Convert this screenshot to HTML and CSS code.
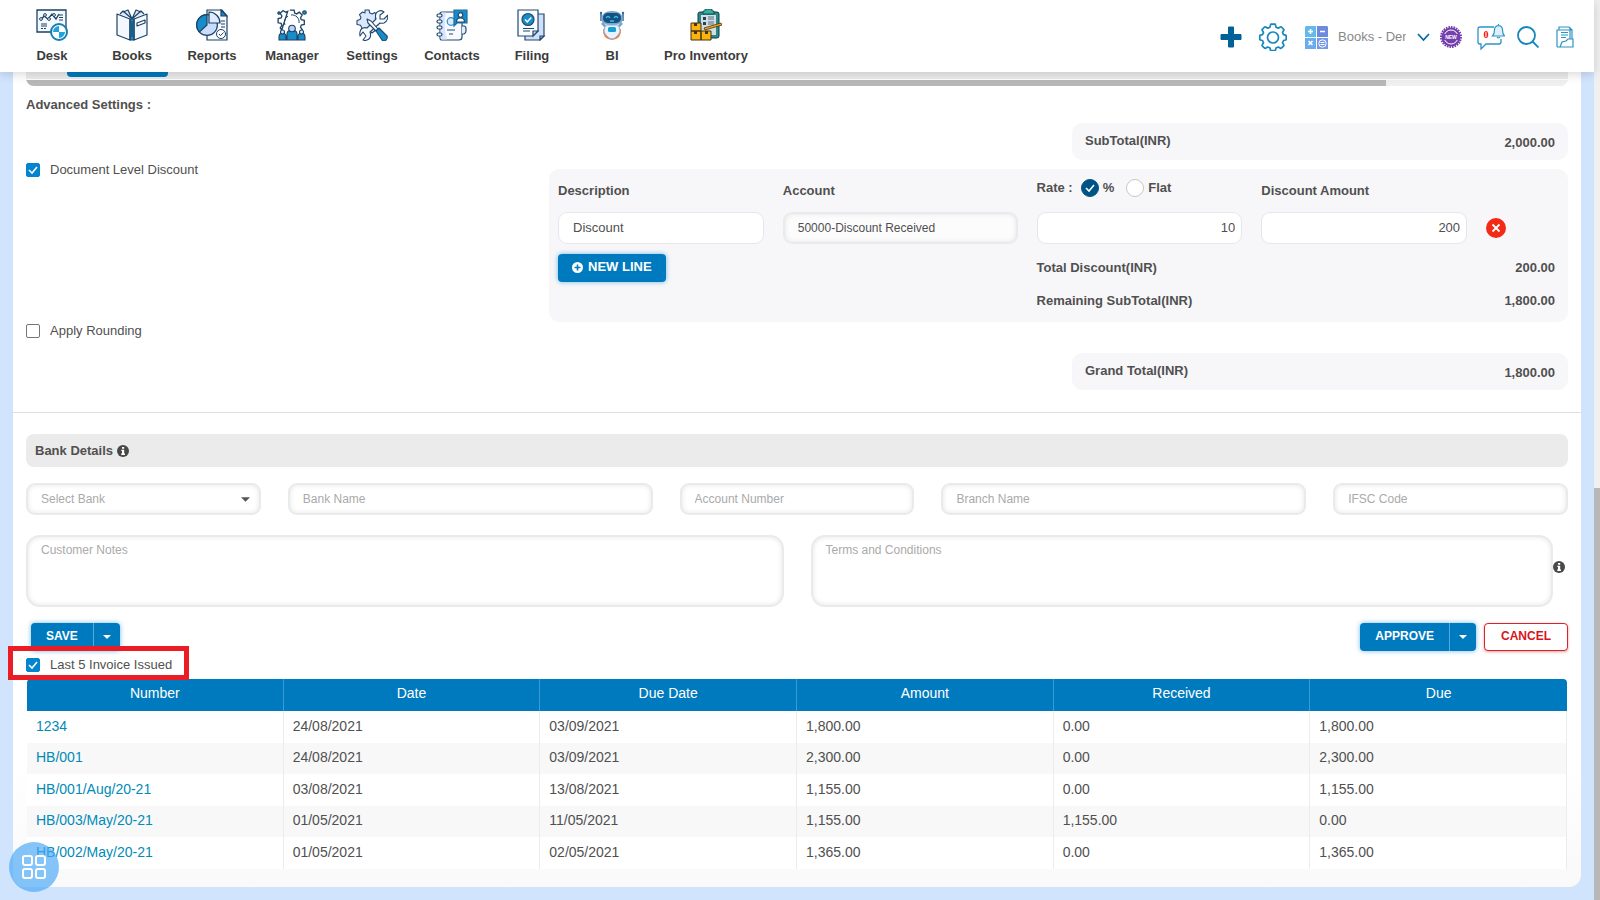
FILE: index.html
```html
<!DOCTYPE html>
<html lang="en">
<head>
<meta charset="utf-8">
<title>Books - Invoice</title>
<meta name="viewport" content="width=device-width, initial-scale=1">
<link rel="stylesheet" href="styles.css">
</head>
<body>
<svg class="defs" width="0" height="0" aria-hidden="true">
  <symbol id="info" viewBox="0 0 12 12"><circle cx="6" cy="6" r="6" fill="#484848"/><path d="M5 2h2.2v1.7H5zM4.3 4.7h2.9v3.8h.8V10H4.2V8.500H5V6.100h-.7z" fill="#fff"/></symbol>
  <symbol id="caret" viewBox="0 0 10 5"><path d="M0 0h10L5 5z" fill="currentColor"/></symbol>
</svg>
<div class="app">
  <header class="topbar">
    <nav class="nav" aria-label="Main">
      <a class="nav-item" href="#"><svg viewBox="0 0 32 32" class="nav-icon"><g fill="#f4f8ff" stroke="#1d4263" stroke-width="1.3"><path d="M1 1h29v22H1z"/><path d="M5 11l3-4 4 3 4-5 4 5 3-5" fill="none"/><g fill="#fff" stroke-width="1"><circle cx="5" cy="10" r="1.400"/><circle cx="9" cy="6" r="1.400"/><circle cx="13" cy="10" r="1.400"/><circle cx="18" cy="6" r="1.400"/></g><path d="M23 6h4M23 8.500h4M23 11h4M5 15h6M5 17h6M5 19.500h2M8 19.500h2" fill="none" stroke-width="1"/></g><circle cx="23" cy="23" r="8" fill="#fff" stroke="#147fb5" stroke-width="2"/><path d="M23 17v6h-6a6 6 0 0 1 6-6zM23 29v-6h6a6 6 0 0 1-6 6z" fill="#20a2dc"/></svg><span>Desk</span></a>
      <a class="nav-item" href="#"><svg viewBox="0 0 32 32" class="nav-icon"><g fill="#f3f7ff" stroke="#1d4263" stroke-width="1.200" stroke-linejoin="round"><path d="M1 5l13 5v21L1 26zM31 5l-13 5v21l13-5z"/><path d="M4 5l3-3 8 7M7 3l5-2 4 9M28 5l-3-3-8 7M25 3l-5-2-4 9" fill="#dce8ff"/><path d="M21 14l8-3v3l-8 3z" fill="#fff"/><path d="M14 10h4v21h-4z" fill="#168cc9"/><path d="M14 13h4M14 27h4M16 14v12"/></g></svg><span>Books</span></a>
      <a class="nav-item" href="#"><svg viewBox="0 0 32 32" class="nav-icon"><g stroke="#1d4263" stroke-width="1.200"><path d="M11 1h15l5 6v24H11z" fill="#f6f8ff"/><path d="M25 1v6h6z" fill="#168cc9"/><path d="M25 12h4M25 15h4M25 18h4" fill="none"/><circle cx="11" cy="16" r="10.400" fill="#c9dcfb"/><path d="M11 5.600A10.400 10.400 0 0 0 3.500 23L11 16z" fill="#168cc9"/><path d="M13 3a11 11 0 0 1 11 11H13z" fill="#dfeaff"/><circle cx="25" cy="25" r="4.500" fill="#fff" stroke-width="1"/><path d="M23 25l1.500 1.700L27.500 23.500" fill="none" stroke-width="1"/></g></svg><span>Reports</span></a>
      <a class="nav-item" href="#"><svg viewBox="0 0 32 32" class="nav-icon"><path d="M13.900 1.100h4.200l.6 3 2 .8 2.600-1.700 2.900 2.900-1.700 2.600.8 2 3 .6v4.200l-3 .6-.8 2 1.700 2.600-2 2M5.800 21l-1.600-2 1.700-2.600-.8-2-3-.6V9.600l3-.6.8-2-1.700-2.600 2.900-2.900 2.600 1.700 2-.8z" fill="none" stroke="#1d4263" stroke-width="1.300"/><path d="M9 16a7 7 0 0 1 3-9M15 6a7 7 0 0 1 8 8" fill="none" stroke="#1d4263"/><g stroke="#1d4263" stroke-width="1.100"><circle cx="3" cy="4" r="1.200" fill="#168cc9"/><circle cx="28.500" cy="3.500" r="1.800" fill="#168cc9"/><path d="M3 31v-3q0-4 3.500-4t3.500 4v3zM22 31v-3q0-4 3.500-4t3.500 4v3zM11 31v-6q0-4 5-4t5 4v6z" fill="#168cc9"/><circle cx="6.500" cy="23" r="2" fill="#dce8ff"/><circle cx="25.500" cy="23" r="2" fill="#dce8ff"/><circle cx="16" cy="19.500" r="3.300" fill="#b8d0f4"/></g></svg><span>Manager</span></a>
      <a class="nav-item" href="#"><svg viewBox="0 0 32 32" class="nav-icon"><g stroke="#234a6d" stroke-width="1.100" stroke-linejoin="round"><path d="M9 1h4l.8 3 2.400 1 2.600-1.500 2 3L19.300 9l.7 2.500 2 .8v3.700l-3 .8-1 2.200 1 2.800-3 2.200-2.600-2L10 22l-2 1.500-3-2 .8-2.800-1.300-2.400L1 15.500v-4L4 10.500l1-2L3.500 5.700l3-2.700L9 4z" fill="#dbe7ff"/><path d="M28 3l-4 3v4h4l4-4q0 6-4 8-2 .6-4 0L14 23q2 6-3 8-2 1-4 0l3-4-3-4-3 4q-1-6 3-8 2-.8 4 0l9-9q-2-6 3-8 2-1 5 1z" fill="#f6f9ff"/><path d="M11 10l4 2 7 8-2 2-8-8z" fill="#fff"/><path d="M20 22l3-3 8 8q1 2-1 4t-4 0z" fill="#168cc9"/></g></svg><span>Settings</span></a>
      <a class="nav-item" href="#"><svg viewBox="0 0 32 32" class="nav-icon"><g stroke="#234a6d" stroke-width="1.200"><path d="M6 3h17q3 0 3 3v22q0 3-3 3H6q-2 0-2-2V5q0-2 2-2z" fill="#f8faff"/><path d="M6 3.500h4q-3 13 1 27H6q-1.500 0-1.500-2v-23z" fill="#d6e4ff" stroke="none"/><path d="M26 17h2q2 0 2 3v2q0 2-2 3h-2" fill="#e3edff"/><g fill="#fff"><rect x="1" y="5" width="5" height="3" rx="1.500"/><rect x="1" y="11" width="5" height="3" rx="1.500"/><rect x="1" y="17" width="5" height="3" rx="1.500"/><rect x="1" y="24" width="5" height="3" rx="1.500"/></g><circle cx="15" cy="12.500" r="3.800" fill="#dce8ff" stroke="#2a91be"/><path d="M11 21h8M13 25h4" fill="none"/><path d="M18 1h13v13H21l-3 3z" fill="#168cc9" stroke="#1b709f"/><circle cx="24.500" cy="6" r="2.300" fill="#fff"/><path d="M20.500 13q0-4 4-4t4 4z" fill="#fff"/></g></svg><span>Contacts</span></a>
      <a class="nav-item" href="#"><svg viewBox="0 0 32 32" class="nav-icon"><g stroke="#234a6d" stroke-width="1.200"><path d="M9 5h19v22l-4 4H9z" fill="#cfdffc"/><path d="M24 31v-4h4z" fill="#9dbbea"/><path d="M2 1h20v21l-5 5H2z" fill="#fbfcff"/><path d="M17 27v-5h5z" fill="#cfdffc"/><circle cx="12" cy="10.500" r="6" fill="#168cc9"/><path d="M9 10.500l2.300 2.300 4-4.300" fill="none" stroke="#fff" stroke-width="1.500"/><path d="M7 19.500h11M7 22h7" fill="none"/></g></svg><span>Filing</span></a>
      <a class="nav-item" href="#"><svg viewBox="0 0 32 32" class="nav-icon"><path d="M7 20q-1 10 9 11 10-1 9-11z" fill="#f18146"/><path d="M5 4v8M27 4v8" stroke="#33699b" stroke-width="1.500"/><circle cx="5" cy="4" r="1.200" fill="#33699b"/><circle cx="27" cy="4" r="1.200" fill="#33699b"/><path d="M5 10q1-8 11-8t11 8q-1 6-11 6T5 10z" fill="#7ba3cc"/><rect x="7" y="4" width="18" height="10" rx="5" fill="#15517f"/><path d="M10 9q2-3 4 0M18 9q2-3 4 0M14 12h4" fill="none" stroke="#39c1ed" stroke-width="1.300"/><path d="M6 14l4 4M26 14l-4 4" stroke="#70a5d6" stroke-width="2.500"/><path d="M10 16h12q4 6 0 10-3 4-6 4t-6-4q-4-4 0-10z" fill="#e7f1ff" stroke="#8faed1"/><rect x="12" y="18" width="8" height="5" rx="1.500" fill="#169fd3"/></svg><span>BI</span></a>
      <a class="nav-item nav-item-wide" href="#"><svg viewBox="0 0 32 32" class="nav-icon"><rect x="8" y="3" width="21" height="26" rx="2" fill="#278a8a" stroke="#123c40"/><path d="M11 6h15v20H11z" fill="#d3dde6"/><path d="M13 4V2h2V0h7v2h2v3H13z" fill="#31b0a5" stroke="#123c40" stroke-width=".8"/><path d="M13 8h3v3h-3zM13 13h3v3h-3z" fill="#29424a"/><path d="M18 8h6M18 10h6M18 13h6M18 15h6" stroke="#57707a"/><g fill="#f9b410" stroke="#453212"><path d="M1 14h10v8H1zM1 22h10v9H1zM11 22h10v9H11z"/></g><path d="M4 14h3v3H4zM4 22h3v3H4zM15 22h3v3h-3z" fill="#453212"/><path d="M14 19l17-5 1 2-17 5z" fill="#f9a810" stroke="#453212" stroke-width=".8"/></svg><span>Pro Inventory</span></a>
    </nav>
    <div class="tools">
      <button class="icon-btn" aria-label="Add"><svg width="22" height="22" viewBox="0 0 22 22"><path d="M8.500 1h5v7.500H21v5h-7.500V21h-5v-7.500H1v-5h7.500z" fill="#006298" stroke="#006298" stroke-linejoin="round"/></svg></button>
      <button class="icon-btn gear" aria-label="Settings"><svg width="28" height="28" viewBox="0 0 28 28"><g fill="none" stroke="#1687bd" stroke-width="1.700" stroke-linejoin="round"><path d="M12.200 1.200h3.600q.6 0 .7.700l.5 2.300 2.300 1 2.100-1.300q.5-.3 1 .1l2.300 2.300q.4.500.1 1l-1.300 2.100 1 2.300 2.100.5q.6.100.6.700v3.400q0 .6-.6.700l-2.100.5-1 2.300 1.300 2.100q.3.500-.1 1l-2.300 2.300q-.5.400-1 .1l-2.100-1.300-2.300 1-.5 2.100q-.1.600-.7.600h-3.600q-.6 0-.7-.6l-.5-2.100-2.300-1-2.100 1.300q-.5.300-1-.1l-2.300-2.300q-.4-.5-.1-1l1.300-2.100-1-2.300-2.100-.5q-.6-.1-.6-.7v-3.400q0-.6.600-.7l2.100-.5 1-2.300-1.300-2.100q-.3-.5.100-1l2.300-2.300q.5-.4 1-.1l2.100 1.300 2.300-1 .5-2.300q.1-.7.700-.7z"/><circle cx="14" cy="14.500" r="5.500"/></g></svg></button>
      <svg class="calc" width="23" height="23" viewBox="0 0 23 23"><path d="M1 0h10v11H0V1z" fill="#61bae8"/><path d="M12 0h10l1 1v10H12z" fill="#6e8ade"/><path d="M0 12h11v11H0z" fill="#6bacec"/><path d="M12 12h11v11H12z" fill="#7699e5"/><path d="M3 5.500h5M5.500 3v5M15 5.500h5M3.500 15l4 4M7.500 15l-4 4" stroke="#fff" stroke-width="1.600"/><circle cx="17.500" cy="17.500" r="3.700" fill="none" stroke="#fff"/><path d="M15.500 16.500h4M15.500 18.500h4" stroke="#fff"/></svg>
      <select class="org" aria-label="Organisation"><option>Books - Demo</option></select>
      <svg class="chev" width="13" height="9" viewBox="0 0 13 9"><path d="M1 1l5.500 6L12 1" fill="none" stroke="#006a9e" stroke-width="1.700"/></svg>
      <button class="icon-btn new" aria-label="What is new"><svg width="22" height="22" viewBox="0 0 22 22"><circle cx="11" cy="11" r="9.500" fill="#7440ae"/><circle cx="11" cy="11" r="10" fill="none" stroke="#7440ae" stroke-width="2" stroke-dasharray="1.600 1"/><circle cx="11" cy="11" r="7" fill="none" stroke="#fff" stroke-width="1"/><path d="M3 8h16v6H3z" fill="#7440ae"/><text x="11" y="13" text-anchor="middle" class="new-text">NEW</text></svg></button>
      <button class="icon-btn chat" aria-label="Notifications"><svg width="28" height="26" viewBox="0 0 28 26"><path d="M17 3H3Q1 3 1 5v13q0 2 2 2h1v5l5-5h13q2 0 2-2v-3" fill="none" stroke="#2b94c5" stroke-width="1.300"/><path d="M15.500 12q2-2 2-6 0-4 4-4.500 4 .5 4 4.500 0 4 2 6zM20 13q1.500 2 3 0M21.500 0v2" fill="#dff0fb" stroke="#2b94c5" stroke-width="1.200"/><text x="9" y="14" text-anchor="middle" class="chat-text">0</text></svg></button>
      <button class="icon-btn search" aria-label="Search"><svg width="22" height="22" viewBox="0 0 22 22"><circle cx="9.500" cy="9.500" r="8.500" fill="none" stroke="#1687bd" stroke-width="1.800"/><path d="M15.500 15.500l6 6" stroke="#1687bd" stroke-width="1.800"/></svg></button>
      <button class="icon-btn" aria-label="Documents"><svg width="18" height="22" viewBox="0 0 18 22"><g fill="none" stroke="#2b94c5" stroke-width="1.200"><path d="M1 21V4h2V1h10l1 1v2h2v9M3 4h11v9M1 21h16v-8h-5l-2 2-4 1-2 5M14 2l2 2"/><path d="M5 6.500h7M5 9h7M5 11.500h5" stroke-width="1.200"/></g></svg></button>
    </div>
  </header>

  <main class="page">
    <section class="card">
      <div class="grid-end"><span class="grid-tab"></span><span class="grid-scroll"><span class="grid-thumb"></span></span></div>
      <h2 class="advanced">Advanced Settings :</h2>
      <div class="total-box"><span class="total-label">SubTotal(INR)</span><output class="total-value">2,000.00</output></div>

      <div class="discount-row">
        <label class="check"><input type="checkbox" checked><span>Document Level Discount</span></label>
        <div class="discount">
          <div class="cell"><label class="head" for="desc">Description</label><input class="field" id="desc" value="Discount"></div>
          <div class="cell"><label class="head" for="acct">Account</label><input class="field field-inset" id="acct" value="50000-Discount Received"></div>
          <div class="cell"><div class="head rate"><span>Rate :</span><label><input type="radio" name="rate" checked>%</label><label><input type="radio" name="rate">Flat</label></div><input class="field num" aria-label="Rate" value="10"></div>
          <div class="cell"><label class="head" for="amt">Discount Amount</label><input class="field num" id="amt" value="200"></div>
          <button class="remove" aria-label="Remove line"><svg width="20" height="20" viewBox="0 0 20 20"><circle cx="10" cy="10" r="10" fill="#f52a16"/><path d="M6.500 6.500l7 7M13.500 6.500l-7 7" stroke="#fff" stroke-width="1.800"/></svg></button>
          <div class="new-line"><button class="btn"><svg width="11" height="11" viewBox="0 0 11 11"><circle cx="5.500" cy="5.500" r="5.500" fill="#fff"/><path d="M2.500 5.500h6M5.500 2.500v6" stroke="#007abe" stroke-width="1.600"/></svg>NEW LINE</button></div>
          <div class="sums"><div><span>Total Discount(INR)</span><output>200.00</output></div><div><span>Remaining SubTotal(INR)</span><output>1,800.00</output></div></div>
        </div>
      </div>
      <label class="check rounding"><input type="checkbox"><span>Apply Rounding</span></label>
      <div class="total-box grand"><span class="total-label">Grand Total(INR)</span><output class="total-value">1,800.00</output></div>

      <hr class="rule">
      <h2 class="bank">Bank Details <svg width="12" height="12"><use href="#info"/></svg></h2>
      <div class="bank-fields">
        <div class="select-wrap"><select class="field field-inset" aria-label="Select Bank"><option>Select Bank</option></select><svg class="select-caret" width="9" height="5"><use href="#caret"/></svg></div>
        <input class="field field-inset" placeholder="Bank Name" aria-label="Bank Name">
        <input class="field field-inset" placeholder="Account Number" aria-label="Account Number">
        <input class="field field-inset" placeholder="Branch Name" aria-label="Branch Name">
        <input class="field field-inset" placeholder="IFSC Code" aria-label="IFSC Code">
      </div>
      <div class="notes">
        <textarea class="field field-inset" placeholder="Customer Notes" aria-label="Customer Notes"></textarea>
        <div class="terms"><textarea class="field field-inset" placeholder="Terms and Conditions" aria-label="Terms and Conditions"></textarea><svg width="12" height="12"><use href="#info"/></svg></div>
      </div>

      <div class="actions">
        <div class="split"><button class="btn">SAVE</button><button class="btn btn-caret" aria-label="More save options"><svg width="8" height="4"><use href="#caret"/></svg></button></div>
        <div class="actions-end">
          <div class="split"><button class="btn">APPROVE</button><button class="btn btn-caret" aria-label="More approve options"><svg width="8" height="4"><use href="#caret"/></svg></button></div>
          <button class="btn btn-cancel">CANCEL</button>
        </div>
      </div>
      <label class="check last-five"><input type="checkbox" checked><span>Last 5 Invoice Issued</span></label>

      <table class="invoices">
        <thead><tr><th>Number</th><th>Date</th><th>Due Date</th><th>Amount</th><th>Received</th><th>Due</th></tr></thead>
        <tbody>
          <tr><td><a href="#">1234</a></td><td>24/08/2021</td><td>03/09/2021</td><td>1,800.00</td><td>0.00</td><td>1,800.00</td></tr>
          <tr><td><a href="#">HB/001</a></td><td>24/08/2021</td><td>03/09/2021</td><td>2,300.00</td><td>0.00</td><td>2,300.00</td></tr>
          <tr><td><a href="#">HB/001/Aug/20-21</a></td><td>03/08/2021</td><td>13/08/2021</td><td>1,155.00</td><td>0.00</td><td>1,155.00</td></tr>
          <tr><td><a href="#">HB/003/May/20-21</a></td><td>01/05/2021</td><td>11/05/2021</td><td>1,155.00</td><td>1,155.00</td><td>0.00</td></tr>
          <tr><td><a href="#">HB/002/May/20-21</a></td><td>01/05/2021</td><td>02/05/2021</td><td>1,365.00</td><td>0.00</td><td>1,365.00</td></tr>
        </tbody>
      </table>
    </section>
  </main>
</div>
<div class="rail"><div class="rail-thumb"></div></div>
<button class="fab" aria-label="Apps"><svg width="24" height="24" viewBox="0 0 24 24"><g fill="none" stroke="#fff" stroke-width="2"><rect x="1" y="1" width="9" height="9" rx="2"/><rect x="14" y="1" width="9" height="9" rx="2"/><rect x="1" y="14" width="9" height="9" rx="2"/><rect x="14" y="14" width="9" height="9" rx="2"/></g></svg></button>
</body>
</html>
```

FILE: styles.css
```css
* { box-sizing: border-box; }
body {
  margin: 0;
  min-height: 100vh;
  display: flex;
  background: #d1e4fe;
  color: #505050;
  font: 13px/18px "Liberation Sans", Arial, sans-serif;
}
button, input, select, textarea { font: inherit; color: inherit; margin: 0; }
button { cursor: pointer; }
h2 { margin: 0; font-size: 13px; font-weight: bold; }
a { text-decoration: none; }
.defs { position: absolute; }
.app { flex: 1; min-width: 0; }

/* Top bar */
.topbar {
  position: relative;
  z-index: 2;
  display: flex;
  justify-content: space-between;
  height: 72px;
  padding: 0 20px 0 12px;
  background: #fff;
  box-shadow: 0 2px 10px rgba(0, 0, 0, .16);
}
.nav { display: flex; }
.nav-item {
  width: 80px;
  padding-top: 9px;
  display: flex;
  flex-direction: column;
  align-items: center;
  gap: 6px;
  color: #3c3c3c;
  font-weight: bold;
}
.nav-item-wide { width: 108px; }
.nav-icon { width: 32px; height: 32px; }
.tools { display: flex; align-items: center; padding-top: 2px; }
.icon-btn { display: flex; padding: 0; border: 0; background: none; }
.gear { margin-left: 17px; }
.calc { margin-left: 18px; }
.org {
  width: 68px;
  margin-left: 10px;
  padding: 0;
  border: 0;
  background: none;
  color: #888;
  appearance: none;
  overflow: hidden;
  text-overflow: clip;
}
.chev { margin-left: 11px; }
.new { margin-left: 10px; }
.chat { margin-left: 15px; }
.search { margin: 0 17px 0 12px; }
.new-text { font: bold 5px "Liberation Sans", sans-serif; fill: #fff; }
.chat-text { font: bold 10px "Liberation Serif", serif; fill: #f00; }

/* Card */
.page { padding: 0 13px; }
.card {
  padding: 0 13px 18px;
  background: linear-gradient(#fff 85%, #f9f9f9);
  border-radius: 0 0 12px 12px;
}
.grid-end {
  display: flex;
  flex-direction: column;
  justify-content: space-between;
  height: 14px;
  overflow: hidden;
  background: #ececec;
  border-radius: 0 0 8px 8px;
}
.grid-tab { width: 101px; height: 5px; margin-left: 41px; background: #007abe; border-radius: 0 0 4px 4px; }
.grid-scroll { height: 7px; border-top: 1px solid #fff; background: #f0f0f0; }
.grid-thumb { display: block; width: 88.2%; height: 6px; background: #b8b8b8; }
.advanced { margin: 10px 0 9px; }
.total-box {
  display: flex;
  justify-content: space-between;
  width: 496px;
  height: 37px;
  margin-left: auto;
  padding: 9px 13px 0;
  border-radius: 10px;
  background: #f7f7f9;
  font-weight: bold;
}
.total-value { padding-top: 2px; }
.grand { margin-top: 13px; }

.check { display: flex; align-items: center; align-self: start; width: max-content; gap: 10px; }
.check input, .rate input {
  appearance: none;
  flex: none;
  width: 14px;
  height: 14px;
  border: 1px solid #767676;
  border-radius: 2px;
  background: #fff;
}
.check input:checked {
  border-color: #0284ce;
  background: #0284ce url("data:image/svg+xml,%3Csvg xmlns='http://www.w3.org/2000/svg' viewBox='0 0 14 14'%3E%3Cpath d='M3 7l3 3 5-6' fill='none' stroke='white' stroke-width='1.600'/%3E%3C/svg%3E") center / 14px;
}
.discount-row { display: grid; grid-template-columns: 523px 1fr; }
.discount-row .check { padding-top: 1px; }
.discount {
  display: grid;
  grid-template-columns: 206fr 235fr 206fr 206fr 73fr;
  column-gap: 19px;
  align-content: start;
  height: 153px;
  margin-top: 9px;
  padding: 8px 9px 0;
  border-radius: 10px;
  background: #f7f7f9;
}
.cell { min-width: 0; }
.head { display: block; height: 35px; padding-top: 5px; font-weight: bold; }
.field {
  display: block;
  width: 100%;
  height: 32px;
  padding: 0 14px 2px;
  border: 1px solid #e6e7ea;
  border-radius: 9px;
  background: #fff;
  outline: 0;
}
.field-inset { border: 2px solid #e9eaeb; box-shadow: inset 0 0 5px #e4e4e4; padding: 0 13px; font-size: 12px; }
.discount .field-inset { background: #fcfcfd; }
.field::placeholder { color: #aaa; opacity: 1; }
.num { padding: 0 6px 2px; text-align: right; }
.rate { display: flex; gap: 12px; padding-top: 2px; }
.rate span { margin-right: -4px; }
.rate label { display: flex; gap: 4px; }
.rate input { width: 18px; height: 18px; border-color: #c7c7c7; border-radius: 50%; }
.rate input:checked {
  border-color: #005385;
  background: #005385 url("data:image/svg+xml,%3Csvg xmlns='http://www.w3.org/2000/svg' viewBox='0 0 18 18'%3E%3Cpath d='M5 9l3 3 5-6' fill='none' stroke='white' stroke-width='1.600'/%3E%3C/svg%3E") center / 18px;
}
.remove { display: flex; align-self: end; width: 20px; height: 26px; padding: 0; border: 0; background: none; }
.new-line { grid-column: 1 / 3; padding-top: 10px; }
.new-line .btn { padding: 0 14px 2px; gap: 5px; font-size: 13px; line-height: 18px; }
.sums { grid-column: 3 / 6; padding: 15px 4px 0 0; display: grid; gap: 15px; font-weight: bold; }
.sums div { display: flex; justify-content: space-between; }

.rule { height: 1px; margin: 22px -13px 21px; border: 0; background: #e0e0e0; }
.bank { height: 33px; padding: 8px 9px; border-radius: 8px; background: #ebebeb; }
.bank svg { vertical-align: -2px; }
.bank-fields { display: grid; grid-template-columns: 235fr 365fr 235fr 365fr 235fr; gap: 27px; margin: 16px 0 20px; }
.select-wrap { position: relative; }
.select-wrap .field { color: #aaa; appearance: none; }
.select-caret { position: absolute; right: 11px; top: 14px; color: #555; pointer-events: none; }
.notes { display: grid; grid-template-columns: 1fr 1fr; gap: 27px; }
.notes .field { height: 72px; padding: 4px 13px; border-radius: 14px; resize: none; }
.terms { display: flex; align-items: center; padding-right: 3px; }
.terms svg { flex: none; margin-top: -8px; }

/* Buttons */
.btn {
  display: flex;
  align-items: center;
  gap: 4px;
  height: 28px;
  padding: 0 15px;
  border: 0;
  border-radius: 4px;
  background: #007abe;
  color: #fff;
  font-size: 12px;
  font-weight: bold;
  box-shadow: 0 0 5px rgba(0, 132, 206, .55);
}
.split { display: flex; }
.split .btn { border-radius: 4px 0 0 4px; padding-bottom: 2px; }
.split .btn-caret { width: 27px; justify-content: center; padding: 0; border-left: 1px solid #58a9d5; border-radius: 0 4px 4px 0; }
.actions { display: flex; justify-content: space-between; padding-left: 5px; margin-top: 16px; }
.actions-end { display: flex; gap: 8px; }
.btn-cancel { padding: 0 16px 2px; border: 1px solid #d8232a; background: #fff; color: #d8141c; box-shadow: 0 1px 3px rgba(190, 0, 0, .4); }
.last-five { position: relative; margin: 5px 0; }
.last-five::after {
  content: "";
  position: absolute;
  inset: -10px -17px -6px -18px;
  border: 5px solid #eb1c24;
}

/* Recent invoices */
.invoices { width: calc(100% - 2px); margin: 0 1px; border-spacing: 0; table-layout: fixed; font-size: 14px; background: #fff; }
.invoices th { height: 32px; padding: 0 9px 4px; background: #007abe; color: #fff; font-weight: normal; border-right: 1px solid #3b9bd0; }
.invoices th:first-child { border-radius: 4px 0 0 0; }
.invoices th:last-child { border-right: 0; border-radius: 0 4px 0 0; }
.invoices td { height: 32px; padding: 0 9px 3px; border-right: 1px solid #ececec; }
.invoices tr:nth-child(even) td { height: 31px; background: #f8f8f8; }
.invoices a { color: #008bb8; }

.rail { width: 6px; display: flex; align-items: flex-end; background: #f0f0f0; }
.rail-thumb { width: 100%; height: 45.8%; background: #b8b8b8; }
.fab {
  position: fixed;
  left: 9px;
  bottom: 8px;
  z-index: 3;
  width: 50px;
  height: 50px;
  display: grid;
  place-items: center;
  padding: 0;
  border: 0;
  border-radius: 50%;
  background: rgba(73, 168, 246, .68);
}
```
